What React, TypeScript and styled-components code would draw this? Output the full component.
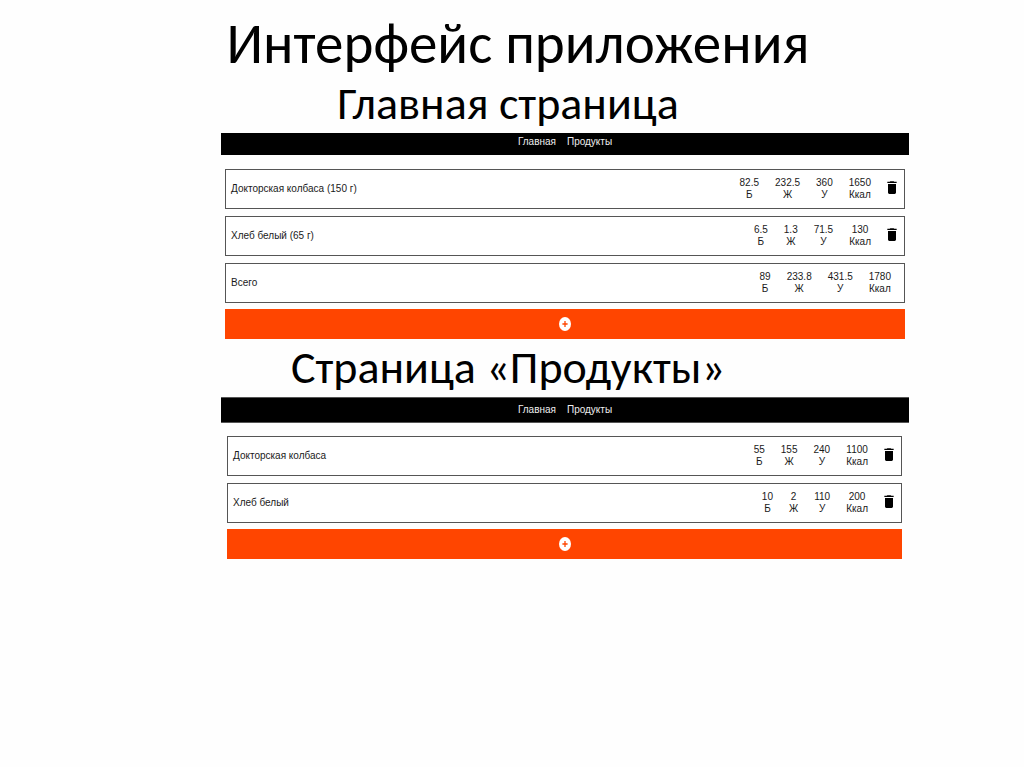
import React from 'react';
import styled, { createGlobalStyle } from 'styled-components';

const GlobalStyle = createGlobalStyle`
  *, *::before, *::after { box-sizing: border-box; }
  body {
    margin: 0;
    background: #fefefe;
    color: #000;
    font-family: "Liberation Sans", Arial, sans-serif;
  }
`;

const Slide = styled.main`
  display: flex;
  flex-direction: column;
  min-height: 100vh;
  padding-top: 12px;
`;

const Title = styled.h1`
  margin: 0;
  padding-left: 12px;
  font: 400 57px/64px Carlito, Calibri, Lato, sans-serif;
  text-align: center;
`;

const Subtitle = styled.h2`
  margin: 0;
  padding: 0 8px 3px 0;
  font: 400 46px/54px Carlito, Calibri, Lato, sans-serif;
  text-align: center;
`;

const Screen = styled.section`
  margin: 0 115px 0 221px;
  padding-bottom: 1px;
`;

const NavBar = styled.nav<{ $tall?: boolean }>`
  display: flex;
  justify-content: center;
  align-items: ${(p) => (p.$tall ? 'center' : 'flex-start')};
  gap: 11px;
  height: ${(p) => (p.$tall ? 26 : 22)}px;
  padding-top: ${(p) => (p.$tall ? 0 : 2)}px;
  border: solid #555;
  border-width: ${(p) => (p.$tall ? '1px 0' : '0')};
  background: #000;
`;

const NavLink = styled.a`
  color: #eee;
  font-size: 10px;
  line-height: 14px;
  text-decoration: none;
`;

const Content = styled.div<{ $inset?: boolean }>`
  padding: ${(p) => (p.$inset ? '13px 7px 0 6px' : '14px 4px 0')};
`;

const List = styled.ul`
  display: flex;
  flex-direction: column;
  gap: 7px;
  margin: 0;
  padding: 0;
  list-style: none;
`;

const Row = styled.li<{ $removable: boolean }>`
  display: flex;
  align-items: center;
  height: 40px;
  padding: 0 ${(p) => (p.$removable ? 4 : 13)}px 0 5px;
  border: 1px solid #555;
  background: #fff;
  color: #1a1a1a;
  font-size: 10px;
  line-height: 12px;
`;

const Name = styled.span`
  flex: 1;
`;

const Stats = styled.div`
  display: flex;
  gap: 16px;
  text-align: center;
`;

const Stat = styled.div`
  display: flex;
  flex-direction: column;
`;

const DeleteButton = styled.button`
  display: flex;
  margin: 0 0 3px 13px;
  padding: 0;
  border: 0;
  background: none;
  cursor: pointer;
`;

const AddButton = styled.button`
  display: flex;
  justify-content: center;
  align-items: center;
  width: 100%;
  height: 30px;
  margin-top: 6px;
  padding: 0;
  border: 0;
  background: #ff4500;
  cursor: pointer;
`;

const TrashIcon = () => (
  <svg width="16" height="17" viewBox="0 0 24 24" preserveAspectRatio="none" aria-hidden="true">
    <path d="M6 19c0 1.1.9 2 2 2h8c1.1 0 2-.9 2-2V7H6v12zM19 4h-3.500l-1-1h-5l-1 1H5v1.700h14V4z" />
  </svg>
);

const PlusIcon = () => (
  <svg width="12" height="14" viewBox="0 0 12 14" aria-hidden="true">
    <ellipse cx="6" cy="7" rx="6" ry="7" fill="#fff" />
    <path d="M6 4v6M3.400 7h5.200" stroke="#ff4500" strokeWidth="1.300" fill="none" />
  </svg>
);

type Item = { name: string; values: string[]; removable: boolean };

const UNITS = ['Б', 'Ж', 'У', 'Ккал'];

const diary: Item[] = [
  { name: 'Докторская колбаса (150 г)', values: ['82.5', '232.5', '360', '1650'], removable: true },
  { name: 'Хлеб белый (65 г)', values: ['6.5', '1.3', '71.5', '130'], removable: true },
  { name: 'Всего', values: ['89', '233.8', '431.5', '1780'], removable: false },
];

const products: Item[] = [
  { name: 'Докторская колбаса', values: ['55', '155', '240', '1100'], removable: true },
  { name: 'Хлеб белый', values: ['10', '2', '110', '200'], removable: true },
];

const AppScreen = ({ items, inset }: { items: Item[]; inset?: boolean }) => (
  <Screen>
    <NavBar $tall={inset}>
      <NavLink href="#main">Главная</NavLink>
      <NavLink href="#products">Продукты</NavLink>
    </NavBar>
    <Content $inset={inset}>
      <List>
        {items.map((item) => (
          <Row key={item.name} $removable={item.removable}>
            <Name>{item.name}</Name>
            <Stats>
              {item.values.map((value, i) => (
                <Stat key={UNITS[i]}>
                  <span>{value}</span>
                  <span>{UNITS[i]}</span>
                </Stat>
              ))}
            </Stats>
            {item.removable && (
              <DeleteButton type="button" aria-label="Удалить">
                <TrashIcon />
              </DeleteButton>
            )}
          </Row>
        ))}
      </List>
      <AddButton type="button" aria-label="Добавить">
        <PlusIcon />
      </AddButton>
    </Content>
  </Screen>
);

export default function App() {
  return (
    <>
      <GlobalStyle />
      <Slide>
        <Title>Интерфейс приложения</Title>
        <Subtitle>Главная страница</Subtitle>
        <AppScreen items={diary} />
        <Subtitle>Страница «Продукты»</Subtitle>
        <AppScreen items={products} inset />
      </Slide>
    </>
  );
}
